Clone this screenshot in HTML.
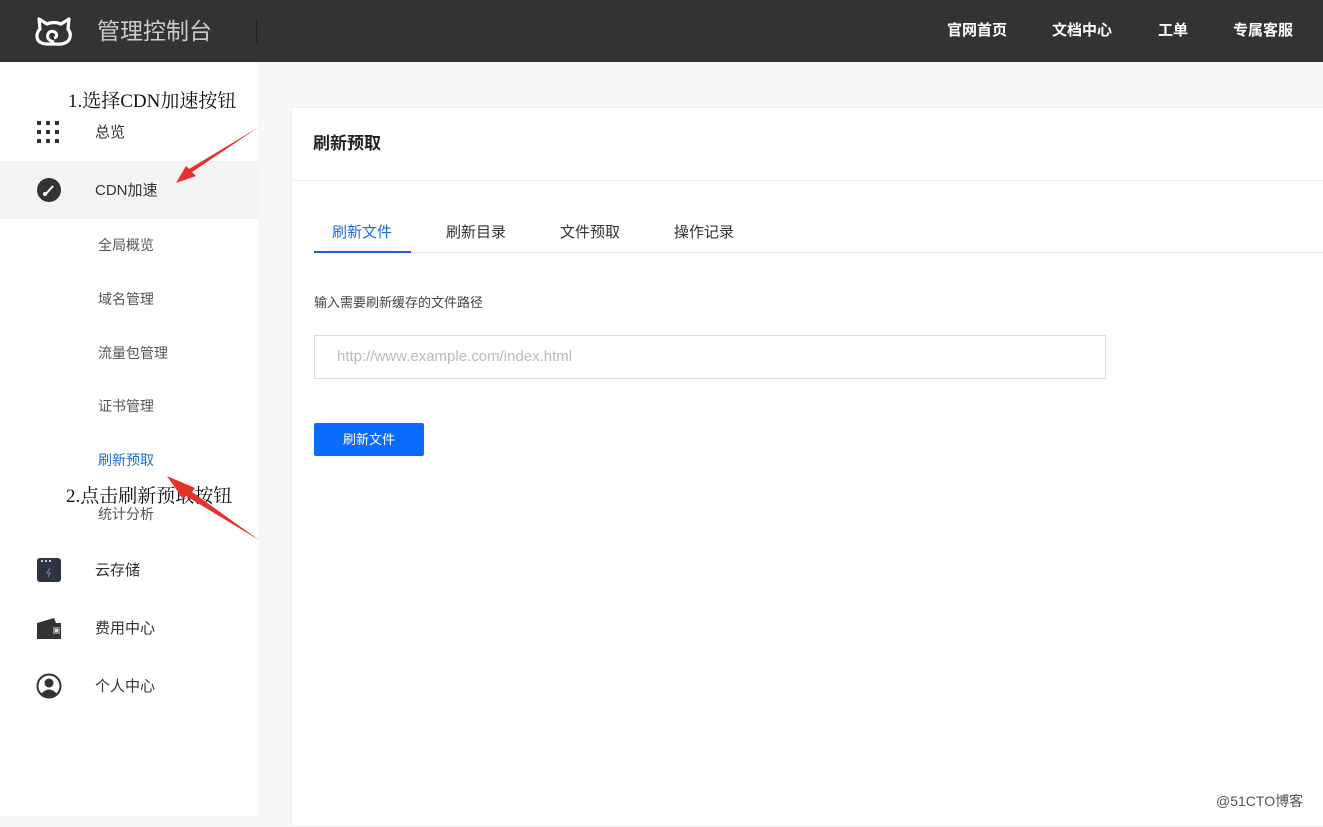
<!DOCTYPE html>
<html><head><meta charset="utf-8"><style>
*{margin:0;padding:0;box-sizing:border-box}
body{width:1323px;height:816px;overflow:hidden;position:relative;background:#f7f7f7;font-family:"Liberation Sans","Noto Sans CJK SC",sans-serif;color:#333}
.hd{position:absolute;left:0;top:0;width:1323px;height:62px;background:#333}
.hd .t{position:absolute;left:97px;top:12px;font-size:23px;color:#ccc}
.hd .sep{position:absolute;left:256px;top:19px;width:1px;height:24px;background:#222}
.hd .nav{position:absolute;top:19px;font-size:15px;color:#fff;font-weight:bold}
.sb{position:absolute;left:0;top:62px;width:258px;height:754px;background:#fff}
.it{position:absolute;left:0;width:258px;height:58px;font-size:15px;color:#333}
.it span{position:absolute;left:95px;top:18px}
.it svg{position:absolute;left:36px;top:16px}
.sub{position:absolute;left:98px;font-size:14px;color:#555}
.card{position:absolute;left:291px;top:107px;width:1040px;height:720px;background:#fff;border:1px solid #eee}
.ann{position:absolute;font-family:"Liberation Serif","Noto Serif CJK SC",serif;font-size:19px;color:#111}
</style></head><body>
<div class="hd">
<svg style="position:absolute;left:34px;top:15px" width="40" height="32" viewBox="0 0 40 32"><path d="M6 14 L5 4 L13 9 Q20 6 27 9 L35 4 L34 14 Q38 19 35 25 Q31 30 22 29 L12 29 Q3 28 3 21 Q3 17 6 14Z" fill="none" stroke="#fff" stroke-width="3.2" stroke-linejoin="round"/><path d="M20 27 Q12 25 14 19 Q17 14 22 18 Q24 22 20 23" fill="none" stroke="#fff" stroke-width="3"/></svg>
<div class="t">管理控制台</div><div class="sep"></div>
<div class="nav" style="left:947px">官网首页</div>
<div class="nav" style="left:1052px">文档中心</div>
<div class="nav" style="left:1158px">工单</div>
<div class="nav" style="left:1233px">专属客服</div>
</div>
<div class="sb">
<div class="it" style="top:41px"><svg width="26" height="26" viewBox="0 0 26 26" fill="#333"><rect x="1" y="2" width="4" height="4"/><rect x="10" y="2" width="4" height="4"/><rect x="19" y="2" width="4" height="4"/><rect x="1" y="11" width="4" height="4"/><rect x="10" y="11" width="4" height="4"/><rect x="19" y="11" width="4" height="4"/><rect x="1" y="20" width="4" height="4"/><rect x="10" y="20" width="4" height="4"/><rect x="19" y="20" width="4" height="4"/></svg><span>总览</span></div>
<div class="it" style="top:99px;background:#f4f4f4"><svg width="26" height="26" viewBox="0 0 26 26"><circle cx="13" cy="13" r="12" fill="#333"/><path d="M9 18 L17 9" stroke="#fff" stroke-width="2"/><circle cx="9" cy="17" r="2" fill="#fff"/></svg><span>CDN加速</span></div>
<div class="sub" style="top:173px">全局概览</div>
<div class="sub" style="top:227px">域名管理</div>
<div class="sub" style="top:281px">流量包管理</div>
<div class="sub" style="top:334px">证书管理</div>
<div class="sub" style="top:388px;color:#1a6dd8">刷新预取</div>
<div class="sub" style="top:442px">统计分析</div>
<div class="it" style="top:479px"><svg width="26" height="26" viewBox="0 0 26 26"><rect x="1" y="1" width="24" height="24" rx="3" fill="#2d3340"/><circle cx="6" cy="4" r="1" fill="#fff"/><circle cx="10" cy="4" r="1" fill="#fff"/><circle cx="14" cy="4" r="1" fill="#fff"/><path d="M14 11 L11 16 L14 16 L12 20" stroke="#889" fill="none"/></svg><span>云存储</span></div>
<div class="it" style="top:537px"><svg width="26" height="26" viewBox="0 0 26 26"><path d="M1 8 L18 3 L20 8 L25 8 L25 24 L1 24Z" fill="#333"/><rect x="17" y="12" width="7" height="7" fill="#888"/><rect x="19" y="14" width="3" height="3" fill="#ddd"/></svg><span>费用中心</span></div>
<div class="it" style="top:595px"><svg width="26" height="26" viewBox="0 0 26 26"><circle cx="13" cy="13" r="11.5" fill="#fff" stroke="#333" stroke-width="2"/><circle cx="13" cy="10" r="4.5" fill="#333"/><path d="M5 21 Q13 12 21 21 Q13 26 5 21Z" fill="#333"/></svg><span>个人中心</span></div>
</div>
<div class="card">
<div style="position:absolute;left:21px;top:21px;font-size:17px;font-weight:bold;color:#222">刷新预取</div>
<div style="position:absolute;left:0;top:72px;width:100%;height:1px;background:#eee"></div>
<div style="position:absolute;left:22px;top:144px;width:1020px;height:1px;background:#e3e3e3"></div>
<div style="position:absolute;left:22px;top:143px;width:97px;height:2px;background:#1a5fd0"></div>
<div style="position:absolute;left:40px;top:113px;font-size:15px;color:#1a6dd8">刷新文件</div>
<div style="position:absolute;left:154px;top:113px;font-size:15px">刷新目录</div>
<div style="position:absolute;left:268px;top:113px;font-size:15px">文件预取</div>
<div style="position:absolute;left:382px;top:113px;font-size:15px">操作记录</div>
<div style="position:absolute;left:22px;top:184px;font-size:13px;color:#444">输入需要刷新缓存的文件路径</div>
<div style="position:absolute;left:22px;top:227px;width:792px;height:44px;border:1px solid #ddd"><span style="position:absolute;left:22px;top:12px;font-size:15px;color:#bbb">http://www.example.com/index.html</span></div>
<div style="position:absolute;left:22px;top:315px;width:110px;height:33px;background:#0a6cff;border-radius:2px;color:#fff;font-size:13px;text-align:center;line-height:33px">刷新文件</div>
</div>
<div class="ann" style="left:68px;top:86px">1.选择CDN加速按钮</div>
<div class="ann" style="left:66px;top:481px">2.点击刷新预取按钮</div>
<svg style="position:absolute;left:0;top:0" width="300" height="560"><path d="M259 127 L192 172 L196 176 L176 183 L186 166 L189 169 Z" fill="#e8302a"/><path d="M259 540 L192 492 L195 488 L167 476 L183 499 L186 496 Z" fill="#e8302a"/></svg>
<div style="position:absolute;left:1216px;top:791px;font-size:14px;color:#555">@51CTO博客</div>
</body></html>
